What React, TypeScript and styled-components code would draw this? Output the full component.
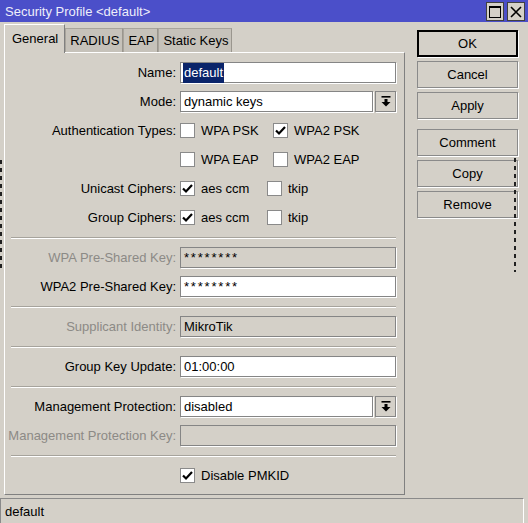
import React from "react";
import styled, { createGlobalStyle } from "styled-components";

const GlobalStyle = createGlobalStyle`
    html, body {
        margin: 0;
        padding: 0;
        background: #d4d0c8;
    }
    body {
        font-family: "Liberation Sans", Arial, sans-serif;
        font-size: 13px;
        color: #000;
    }
`;

const Window = styled.div`
    position: relative;
    width: 528px;
    height: 523px;
    display: flex;
    flex-direction: column;
    background: #d4d0c8;
    overflow: hidden;
`;

const TitleBar = styled.div`
    height: 22px;
    flex: none;
    display: flex;
    align-items: center;
    justify-content: space-between;
    background: #4b4fc9;
    color: #eeeefa;
    padding: 0 3px 0 5px;
`;

const TitleButtons = styled.div`
    display: flex;
    gap: 3px;
    padding-top: 1px;
`;

const TitleButton = styled.div`
    width: 16px;
    height: 17px;
    background: #d4d0c8;
    border: 1px solid #404040;
    display: flex;
    align-items: center;
    justify-content: center;
`;

const Body = styled.div`
    flex: 1;
    display: flex;
    padding: 2px 0 0 4px;
`;

const LeftColumn = styled.div`
    width: 401px;
    display: flex;
    flex-direction: column;
`;

const Tabs = styled.div`
    height: 28px;
    display: flex;
    align-items: flex-end;
    position: relative;
    z-index: 1;
`;

const Tab = styled.div<{ $active?: boolean }>`
    box-sizing: border-box;
    display: flex;
    align-items: center;
    height: ${(p) => (p.$active ? "29px" : "24px")};
    margin-bottom: ${(p) => (p.$active ? "-1px" : "0")};
    padding: ${(p) => (p.$active ? "0 6px 2px 7px" : "0 3px 0 4px")};
    background: ${(p) => (p.$active ? "#d4d0c8" : "#c6c2ba")};
    border-top: 1px solid ${(p) => (p.$active ? "#fff" : "#a8a49c")};
    border-left: 1px solid ${(p) => (p.$active ? "#fff" : "#a8a49c")};
    border-right: 1px solid ${(p) => (p.$active ? "#808080" : "#9a968e")};
    white-space: nowrap;
`;

const Panel = styled.div`
    box-sizing: border-box;
    height: 443px;
    border-top: 1px solid #fff;
    border-left: 1px solid #fff;
    border-right: 1px solid #808080;
    border-bottom: 1px solid #808080;
    padding: 9px 8px 0 0;
`;

const Form = styled.div`
    display: grid;
    grid-template-columns: 171px 216px;
    column-gap: 4px;
    row-gap: 8px;
    grid-auto-rows: 21px;
`;

const Label = styled.div<{ $disabled?: boolean }>`
    display: flex;
    align-items: center;
    justify-content: flex-end;
    white-space: nowrap;
    color: ${(p) => (p.$disabled ? "#8c8a86" : "#000")};
`;

const Divider = styled.div`
    height: 0;
    margin: 9px 0 8px 6px;
    border-top: 1px solid #a6a39c;
    border-bottom: 1px solid #fff;
`;

const Field = styled.div<{ $disabled?: boolean; $secret?: boolean }>`
    box-sizing: border-box;
    height: 21px;
    flex: 1;
    display: flex;
    align-items: center;
    padding: 0 3px;
    background: ${(p) => (p.$disabled ? "#d4d0c8" : "#fff")};
    border: 1px solid #858585;
    box-shadow: 1px 1px 0 #fff;
    letter-spacing: ${(p) => (p.$secret ? "1.8px" : "0")};
    white-space: nowrap;
`;

const Selected = styled.span`
    background: #0a246a;
    color: #fff;
    margin-left: -1px;
    padding: 2px 1px 3px;
`;

const FieldRow = styled.div`
    display: flex;
    gap: 2px;
`;

const DropButton = styled.div`
    box-sizing: border-box;
    width: 21px;
    height: 21px;
    display: flex;
    align-items: center;
    justify-content: center;
    border: 1px solid #858585;
    box-shadow: 1px 1px 0 #fff;
`;

const CheckRow = styled.div`
    display: flex;
    align-items: center;
`;

const CheckItem = styled.div<{ $w?: number }>`
    display: flex;
    align-items: center;
    gap: 6px;
    width: ${(p) => (p.$w ? `${p.$w}px` : "auto")};
    white-space: nowrap;
`;

const Box = styled.div`
    box-sizing: border-box;
    width: 15px;
    height: 15px;
    background: #fff;
    border: 1px solid #8a8a8a;
    display: flex;
    align-items: center;
    justify-content: center;
`;

const RightColumn = styled.div`
    margin-left: 12px;
    padding-top: 6px;
    width: 101px;
    display: flex;
    flex-direction: column;
`;

const ButtonGroup = styled.div`
    display: flex;
    flex-direction: column;
    gap: 4px;
    & + & {
        margin-top: 10px;
    }
`;

const Button = styled.div<{ $default?: boolean }>`
    box-sizing: border-box;
    height: 27px;
    display: flex;
    align-items: center;
    justify-content: center;
    border: 1px solid ${(p) => (p.$default ? "#000" : "#8a8a8a")};
    box-shadow: ${(p) =>
        p.$default ? "inset 0 0 0 1px #d4d0c8, 1px 1px 0 #fff" : "1px 1px 0 #fff"};
    outline: ${(p) => (p.$default ? "1px solid #000" : "none")};
    outline-offset: -2px;
`;

const StatusBar = styled.div`
    box-sizing: border-box;
    flex: none;
    height: 25px;
    width: 524px;
    margin-top: 1px;
    display: flex;
    align-items: center;
    padding-left: 4px;
    border-top: 1px solid #8a8a8a;
    border-left: 1px solid #8a8a8a;
    border-right: 1px solid #fff;
`;

const DragLine = styled.div<{ $left: number; $top: number; $h: number }>`
    position: absolute;
    left: ${(p) => p.$left}px;
    top: ${(p) => p.$top}px;
    width: 2px;
    height: ${(p) => p.$h}px;
    background: repeating-linear-gradient(
        to bottom,
        #202020 0 4px,
        transparent 4px 8px
    );
`;

const Check = () => (
    <svg width="11" height="10" viewBox="0 0 11 10">
        <path d="M1 4.5 L4 7.5 L10 1" fill="none" stroke="#000" strokeWidth="2.2" />
    </svg>
);

const CheckBox = ({ checked, label, w }: { checked?: boolean; label: string; w?: number }) => (
    <CheckItem $w={w}>
        <Box>{checked && <Check />}</Box>
        <span>{label}</span>
    </CheckItem>
);

const DropIcon = () => (
    <svg width="10" height="11" viewBox="0 0 10 11">
        <rect x="0.5" y="0" width="9" height="1.6" fill="#000" />
        <rect x="3.5" y="3" width="3" height="3" fill="#000" />
        <path d="M0.5 6 L9.5 6 L5 10.5 Z" fill="#000" />
    </svg>
);

const Select = ({ value }: { value: string }) => (
    <FieldRow>
        <Field>{value}</Field>
        <DropButton>
            <DropIcon />
        </DropButton>
    </FieldRow>
);

const App = () => {
    return (
        <Window>
            <GlobalStyle />
            <TitleBar>
                <span>Security Profile &lt;default&gt;</span>
                <TitleButtons>
                    <TitleButton>
                        <svg width="12" height="12" viewBox="0 0 12 12">
                            <rect x="0.5" y="0.5" width="11" height="11" fill="none" stroke="#000" />
                            <rect x="0.5" y="0.5" width="11" height="1.5" fill="#000" />
                        </svg>
                    </TitleButton>
                    <TitleButton>
                        <svg width="12" height="12" viewBox="0 0 12 12">
                            <path d="M1 1 L11 11 M11 1 L1 11" stroke="#000" strokeWidth="1.6" />
                        </svg>
                    </TitleButton>
                </TitleButtons>
            </TitleBar>
            <Body>
                <LeftColumn>
                    <Tabs>
                        <Tab $active>General</Tab>
                        <Tab>RADIUS</Tab>
                        <Tab>EAP</Tab>
                        <Tab>Static Keys</Tab>
                    </Tabs>
                    <Panel>
                        <Form>
                            <Label>Name:</Label>
                            <Field>
                                <Selected>default</Selected>
                            </Field>

                            <Label>Mode:</Label>
                            <Select value="dynamic keys" />

                            <Label>Authentication Types:</Label>
                            <CheckRow>
                                <CheckBox label="WPA PSK" w={93} />
                                <CheckBox label="WPA2 PSK" checked />
                            </CheckRow>

                            <Label />
                            <CheckRow>
                                <CheckBox label="WPA EAP" w={93} />
                                <CheckBox label="WPA2 EAP" />
                            </CheckRow>

                            <Label>Unicast Ciphers:</Label>
                            <CheckRow>
                                <CheckBox label="aes ccm" checked w={87} />
                                <CheckBox label="tkip" />
                            </CheckRow>

                            <Label>Group Ciphers:</Label>
                            <CheckRow>
                                <CheckBox label="aes ccm" checked w={87} />
                                <CheckBox label="tkip" />
                            </CheckRow>
                        </Form>
                        <Divider />
                        <Form>
                            <Label $disabled>WPA Pre-Shared Key:</Label>
                            <Field $disabled $secret>********</Field>

                            <Label>WPA2 Pre-Shared Key:</Label>
                            <Field $secret>********</Field>
                        </Form>
                        <Divider />
                        <Form>
                            <Label $disabled>Supplicant Identity:</Label>
                            <Field $disabled>MikroTik</Field>
                        </Form>
                        <Divider />
                        <Form>
                            <Label>Group Key Update:</Label>
                            <Field>01:00:00</Field>
                        </Form>
                        <Divider />
                        <Form>
                            <Label>Management Protection:</Label>
                            <Select value="disabled" />

                            <Label $disabled>Management Protection Key:</Label>
                            <Field $disabled />
                        </Form>
                        <Divider />
                        <Form>
                            <Label />
                            <CheckRow>
                                <CheckBox label="Disable PMKID" checked />
                            </CheckRow>
                        </Form>
                    </Panel>
                </LeftColumn>
                <RightColumn>
                    <ButtonGroup>
                        <Button $default>OK</Button>
                        <Button>Cancel</Button>
                        <Button>Apply</Button>
                    </ButtonGroup>
                    <ButtonGroup>
                        <Button>Comment</Button>
                        <Button>Copy</Button>
                        <Button>Remove</Button>
                    </ButtonGroup>
                </RightColumn>
            </Body>
            <StatusBar>default</StatusBar>
            <DragLine $left={0} $top={160} $h={112} />
            <DragLine $left={514} $top={158} $h={114} />
        </Window>
    );
};

export default App;
